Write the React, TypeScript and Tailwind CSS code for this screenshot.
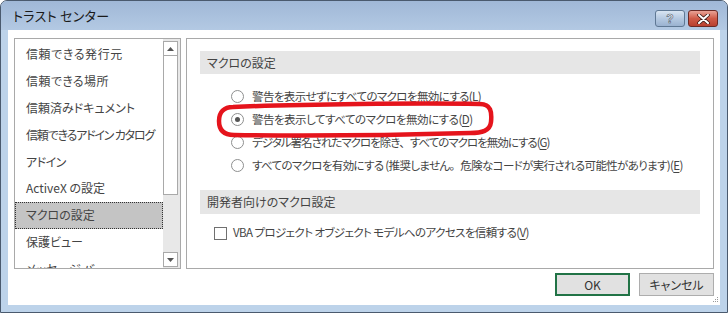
import React from "react";

const F = { fontFamily: '"Noto Sans CJK JP", "Noto Sans", sans-serif', fontFeatureSettings: '"palt"' } as React.CSSProperties;
const FW = { fontFeatureSettings: "normal" } as React.CSSProperties;

const listItems: [string, string][] = [
  ["信頼できる発行元", "tracking-[0.6px]"],
  ["信頼できる場所", "tracking-[0.4px]"],
  ["信頼済みドキュメント", "tracking-[0px]"],
  ["信頼できるアドイン カタログ", "tracking-[-1.2px]"],
  ["アドイン", "tracking-[-0.5px]"],
  ["ActiveX の設定", "tracking-[0px]"],
  ["マクロの設定", "tracking-[0px]"],
  ["保護ビュー", "tracking-[0px]"],
  ["メッセージ バー", "tracking-[0px]"],
];

function Radio({ checked }: { checked?: boolean }) {
  return (
    <span className="w-[13px] h-[13px] rounded-full border border-[#8e8f8f] bg-white flex items-center justify-center shrink-0">
      {checked && <span className="w-[5px] h-[5px] rounded-full bg-[#555]" />}
    </span>
  );
}

function U({ c }: { c: string }) {
  return <span className="underline underline-offset-2">{c}</span>;
}

export default function App() {
  return (
    <div className="w-[728px] h-[313px] bg-white relative" style={F}>
      <div className="w-full h-full border border-[#4a5a6e] rounded-t-[7px] bg-[#bdd3ea] flex flex-col overflow-hidden">
        {/* Title bar */}
        <div className="h-[29px] shrink-0 flex items-center justify-between pl-[12px] pr-[9px] bg-gradient-to-b from-[#a0b8d7] to-[#b3c9e3]">
          <span className="text-[13px] text-[#1a1a1a] leading-none tracking-[0.3px]">トラスト センター</span>
          <div className="flex gap-[3px] self-start mt-[9px]">
            <div className="w-[30px] h-[17px] rounded-[3px] border border-[#5f7894] bg-gradient-to-b from-[#d9e5f2] via-[#b5c9e1] to-[#9ab2d0] flex items-center justify-center">
              <span className="text-[12px] font-bold text-white leading-none" style={{ fontFamily: '"Liberation Sans", sans-serif', WebkitTextStroke: "0.6px #4a5568" }}>?</span>
            </div>
            <div className="w-[30px] h-[17px] rounded-[3px] border border-[#6b2a25] bg-gradient-to-b from-[#e8a296] via-[#cf5b48] to-[#b9402f] flex items-center justify-center">
              <svg width="13" height="10" viewBox="0 0 13 10">
                <path d="M2 1 L11 9 M11 1 L2 9" stroke="#3b1a16" strokeWidth="3.6" strokeLinecap="round" />
                <path d="M2 1 L11 9 M11 1 L2 9" stroke="#fff" strokeWidth="2" strokeLinecap="round" />
              </svg>
            </div>
          </div>
        </div>
        {/* Client */}
        <div className="flex-1 mx-[7px] mb-[7px] bg-white flex flex-col">
          <div className="flex gap-[5px] pt-[8px] pl-[6px] pr-[6px] h-[239px]">
            {/* Left list */}
            <div className="w-[167px] h-[231px] border border-[#a9a9a9] flex">
              <div className="flex-1 overflow-hidden pt-[2px] flex flex-col">
                {listItems.map(([t, tr], i) => (
                  <div key={t} className={"h-[26.8px] shrink-0 flex items-center pl-[11px] text-[12px] text-[#444] whitespace-nowrap " + tr + (i === 6 ? " bg-[#c4c4c4] outline outline-1 outline-dotted outline-[#333] -outline-offset-1" : "")}>
                    {t}
                  </div>
                ))}
              </div>
              <div className="w-[17px] flex flex-col bg-[#e8e8e8] pr-[2px] pt-[2px] pb-[1px]">
                <div className="h-[15px] border border-[#a9a9a9] bg-white flex items-center justify-center">
                  <svg width="7" height="4" viewBox="0 0 7 4"><path d="M3.5 0 L7 4 L0 4 Z" fill="#555" /></svg>
                </div>
                <div className="h-[139px] border-x border-b border-[#a9a9a9] bg-white" />
                <div className="flex-1" />
                <div className="h-[15px] border border-[#a9a9a9] bg-white flex items-center justify-center">
                  <svg width="7" height="4" viewBox="0 0 7 4"><path d="M0 0 L7 0 L3.5 4 Z" fill="#555" /></svg>
                </div>
              </div>
            </div>
            {/* Right panel */}
            <div className="w-[528px] h-[231px] border border-[#a9a9a9] pt-[12px] px-[13px] flex flex-col text-[12px] text-[#444] whitespace-nowrap">
              <div className="h-[23px] bg-[#e6e6e6] flex items-center pl-[7px]">マクロの設定</div>
              <div className="flex flex-col pt-[11px] pl-[31px] text-[11.5px]">
                <div className="h-[23px] flex items-center gap-[8px] tracking-[-0.6px]"><Radio /><span>警告を表示せずにすべてのマクロを無効にする(<U c="L" />)</span></div>
                <div className="h-[23px] flex items-center gap-[8px] tracking-[-0.5px]"><Radio checked /><span>警告を表示してすべてのマクロを無効にする(<U c="D" />)</span></div>
                <div className="h-[23px] flex items-center gap-[8px] tracking-[-1px]"><Radio /><span>デジタル署名されたマクロを除き<span style={FW}>、</span>すべてのマクロを無効にする(<U c="G" />)</span></div>
                <div className="h-[23px] flex items-center gap-[8px] tracking-[-0.65px]"><Radio /><span>すべてのマクロを有効にする (推奨しません<span style={FW}>。</span>危険なコードが実行される可能性があります)(<U c="E" />)</span></div>
              </div>
              <div className="h-[24px] mt-[13px] bg-[#e6e6e6] flex items-center pl-[7px]">開発者向けのマクロ設定</div>
              <div className="flex items-center gap-[6px] pl-[14px] mt-[11px] h-[16px] text-[11.5px] tracking-[-0.6px]">
                <span className="w-[13px] h-[13px] border border-[#707070] bg-white shrink-0" />
                <span>VBA プロジェクト オブジェクト モデルへのアクセスを信頼する(<U c="V" />)</span>
              </div>
            </div>
          </div>
          {/* Buttons */}
          <div className="flex justify-end gap-[9px] pr-[6px] pt-[4px]">
            <div className="w-[75px] h-[23px] border-2 border-[#217346] bg-[#e1e1e1] flex items-center justify-center text-[12px] text-[#333]">OK</div>
            <div className="w-[75px] h-[23px] border border-[#adadad] bg-[#e1e1e1] flex items-center justify-center text-[12px] text-[#333]">キャンセル</div>
          </div>
        </div>
      </div>
      {/* resize grip */}
      <svg className="absolute left-[712px] top-[296px]" width="7" height="7" viewBox="0 0 7 7">
        <rect x="5" y="1" width="1" height="1" fill="#999" />
        <rect x="3" y="3" width="1" height="1" fill="#999" />
        <rect x="5" y="3" width="1" height="1" fill="#999" />
        <rect x="1" y="5" width="1" height="1" fill="#999" />
        <rect x="3" y="5" width="1" height="1" fill="#999" />
        <rect x="5" y="5" width="1" height="1" fill="#999" />
      </svg>
      {/* red annotation */}
      <svg className="absolute left-0 top-0 pointer-events-none" width="728" height="313">
        <path d="M233 107 C300 104 420 103 480 104 C491 104 492 112 491 122 C490 131 482 133 470 133 C400 135 300 136 234 135 C222 135 219 128 219 121 C219 112 224 107 233 107 Z" fill="none" stroke="#e5141c" strokeWidth="4.5" />
      </svg>
    </div>
  );
}
